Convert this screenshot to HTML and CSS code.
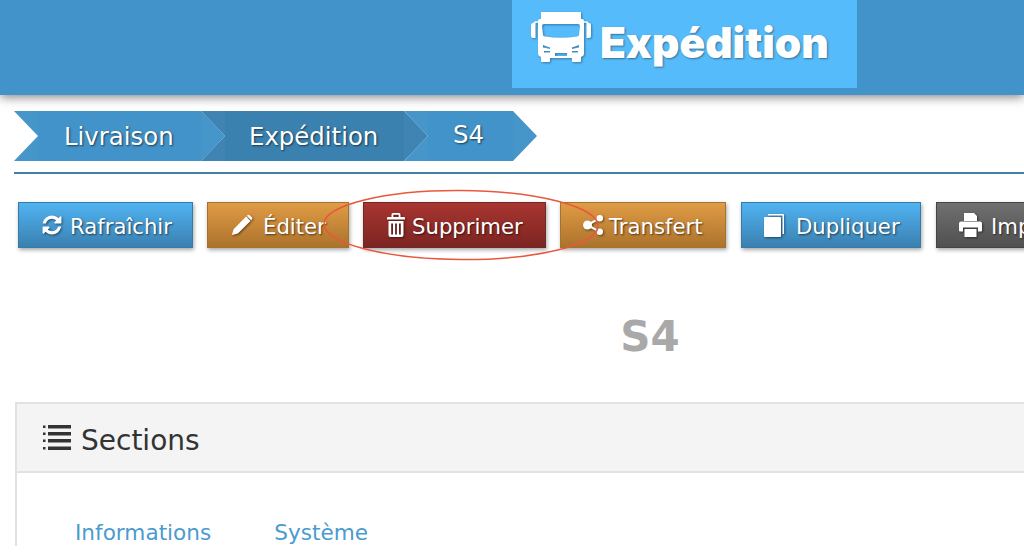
FILE: index.html
```html
<!DOCTYPE html>
<html lang="fr">
<head>
    <meta charset="UTF-8">
    <title>Expédition</title>
    <link rel="stylesheet" href="styles.css">
</head>
<body>
<div class="header">
    <div class="app_tab">
        <svg class="truck" viewBox="0 0 60 50">
            <path fill="#fff" fill-rule="evenodd" d="M10 0h40v7h1q2 0 2 2v33q0 2-3 3v4q0 1-1 1h-7q-1 0-1-1v-3H19v3q0 1-1 1h-7q-1 0-1-1v-4q-3-1-3-3V9q0-2 2-2h1zM13 12q-2 0-2 2l1 9q0 1 2 1.500q16 2.500 32 0q2-.5 2-1.500l1-9q0-2-2-2zM12 33l7 2.500v1.500l-7-1.500zM48 33l-7 2.500v1.500l7-1.500zM13 39v1.500h6V39zM41 39v1.500h6V39zM24 41v3h12v-3z"/>
            <path fill="none" stroke="#fff" stroke-width="1.500" d="M8 10H5q-2 0-2 2M52 10h3q2 0 2 2"/>
            <path fill="#fff" d="M0 13q0-2 2-2h2.500v15H2q-2 0-2-2zM55.500 11H58q2 0 2 2v11q0 2-2 2h-2.500z"/>
        </svg>
        <span class="app_title">Expédition</span>
    </div>
</div>

<div class="content">
    <div class="crumbs">
        <a class="crumb crumb_first">Livraison</a>
        <a class="crumb crumb_dark">Expédition</a>
        <a class="crumb crumb_last"><span>S4</span></a>
    </div>

    <div class="toolbar">
        <button class="btn btn_blue btn_refresh" type="button">
            <svg class="icon" viewBox="0 0 1792 1792"><path d="M1639 1056q0 5-1 7-64 268-268 434.5t-478 166.5q-146 0-282.5-55t-243.5-157l-129 129q-19 19-45 19t-45-19-19-45v-448q0-26 19-45t45-19h448q26 0 45 19t19 45-19 45l-137 137q71 66 161 102t187 36q134 0 250-65t186-179q11-17 53-117 8-23 30-23h192q13 0 22.500 9.500t9.500 22.500zm25-800v448q0 26-19 45t-45 19h-448q-26 0-45-19t-19-45 19-45l138-138q-148-137-349-137-134 0-250 65t-186 179q-11 17-53 117-8 23-30 23h-199q-13 0-22.500-9.500t-9.500-22.500v-7q65-268 270-434.500t480-166.500q146 0 284 55.500t245 156.500l130-129q19-19 45-19t45 19 19 45z"/></svg>
            <span class="btn_text">Rafraîchir</span>
        </button>
        <button class="btn btn_orange btn_edit" type="button">
            <svg class="icon" viewBox="0 0 24 24"><path d="M1 23l1.800-6.500L16.500 2.800l4.700 4.700L7.500 21.200zM18 1.300q1.200-1.200 2.400 0l2.300 2.300q1.200 1.200 0 2.400l-.7.700-4.700-4.700z"/></svg>
            <span class="btn_text">Éditer</span>
        </button>
        <button class="btn btn_red btn_delete" type="button">
            <svg class="icon" viewBox="0 0 18 24"><path fill-rule="evenodd" d="M6 0h6q1.500 0 1.500 1.500V4H17q1 0 1 1v1.500H0V5q0-1 1-1h3.500V1.500Q4.500 0 6 0zM6.300 1.800V4h5.400V1.800zM1.500 8h15v14q0 2-2 2h-11q-2 0-2-2zM4.200 10.500v11H6v-11zM8.100 10.500v11h1.800v-11zM12 10.500v11h1.800v-11z"/></svg>
            <span class="btn_text">Supprimer</span>
        </button>
        <button class="btn btn_orange btn_transfer" type="button">
            <svg class="icon" viewBox="0 0 20 20"><circle cx="4.500" cy="10" r="4.500"/><circle cx="16.800" cy="3.200" r="3.200"/><circle cx="16.800" cy="16.800" r="3.200"/><path d="M4.500 10L16.800 3.200M4.500 10l12.300 6.800" stroke="#fff" stroke-width="2"/></svg>
            <span class="btn_text">Transfert</span>
        </button>
        <button class="btn btn_blue btn_copy" type="button">
            <svg class="icon" viewBox="0 0 20 23"><path d="M4 0h15q1 0 1 1v19h-1.500V1.500H4z"/><path d="M1 3h15q1 0 1 1v18q0 1-1 1H1q-1 0-1-1V4q0-1 1-1z"/></svg>
            <span class="btn_text">Dupliquer</span>
        </button>
        <button class="btn btn_grey btn_print" type="button">
            <svg class="icon" viewBox="0 0 23 24"><path fill-rule="evenodd" d="M5 0h10l3 3v5H5zM2 8.500h19q2 0 2 2v7q0 1-1 1h-3v-4H4v4H1q-1 0-1-1v-7q0-2 2-2zM5.500 16h12v8h-12z"/></svg>
            <span class="btn_text">Imprimer</span>
        </button>
    </div>

    <h2 class="page_title">S4</h2>

    <div class="panel">
        <div class="panel_head">
            <svg class="list_icon" viewBox="0 0 28 25"><path d="M0 .5h2.500V3H0zM5 0h23v3.500H5zM0 7.500h2.500V10H0zM5 7h23v3.500H5zM0 14.500h2.500V17H0zM5 14h23v3.500H5zM0 22h2.500v2.500H0zM5 21.500h23V25H5z"/></svg>
            <span class="panel_title">Sections</span>
        </div>
        <div class="panel_body">
            <a class="tab_link">Informations</a>
            <a class="tab_link">Système</a>
        </div>
    </div>
</div>

<svg class="circled" viewBox="0 0 290 80">
    <ellipse cx="145" cy="40" rx="137" ry="34.500" fill="none" stroke="#e8583c" stroke-width="1.500" transform="rotate(.4 145 40)"/>
</svg>
</body>
</html>
```

FILE: styles.css
```css
html, body {
    margin: 0;
    padding: 0;
    height: 555px;
    overflow: hidden;
    background: #fff;
    font-family: "DejaVu Sans", Verdana, sans-serif;
}

.header {
    height: 95px;
    padding-left: 512px;
    background: #4293c9;
    box-shadow: 0 2px 10px rgba(0, 0, 0, 0.5);
}

.app_tab {
    width: 345px;
    height: 88px;
    background: #56bbfa;
    display: flex;
    align-items: flex-start;
}

.truck {
    width: 60px;
    height: 50px;
    margin: 12px 0 0 19px;
    filter: drop-shadow(1px 1px 1px rgba(0, 0, 0, 0.35));
}

.app_title {
    margin: 14px 0 0 9px;
    color: #fff;
    font-family: Inter, sans-serif;
    font-weight: 900;
    font-size: 42.5px;
    line-height: 58px;
    text-shadow: 1px 1px 2px rgba(0, 0, 0, 0.4);
}

.content {
    padding-left: 14px;
    width: 1200px;
}

.crumbs {
    display: flex;
    margin-top: 16px;
    height: 50px;
    width: 1010px;
    padding-bottom: 11px;
    border-bottom: 2px solid #447fa6;
}

.crumb {
    box-sizing: border-box;
    height: 50px;
    margin-left: -24px;
    padding-top: 1px;
    color: #fff;
    font-size: 24.400px;
    line-height: 50px;
    text-shadow: 1px 1px 2px rgba(0, 0, 0, 0.6);
    background-color: #4293c9;
    background-image: linear-gradient(to right, rgba(255, 255, 255, 0.025) 24px, transparent 24px, transparent calc(100% - 24px), rgba(255, 255, 255, 0.025) calc(100% - 24px));
    clip-path: polygon(0 0, calc(100% - 24px) 0, 100% 50%, calc(100% - 24px) 100%, 0 100%, 24px 50%);
}

.crumb_first {
    width: 211px;
    margin-left: 0;
    padding-left: 50px;
}

.crumb_dark {
    width: 227px;
    padding-left: 48px;
    background-color: #3a81b0;
}

.crumb_last {
    width: 133px;
    padding-left: 49px;
}

.crumb_last span {
    display: block;
    margin-top: -2px;
}

.toolbar {
    display: flex;
    gap: 14px;
    margin: 28px 0 0 4px;
}

.btn {
    box-sizing: border-box;
    flex: none;
    height: 46px;
    display: flex;
    align-items: center;
    justify-content: flex-start;
    padding: 0 0 0 22px;
    color: #fff;
    font-family: inherit;
    font-size: 21.200px;
    white-space: nowrap;
    border: 1px solid;
    text-shadow: 1px 1px 2px rgba(0, 0, 0, 0.6);
    box-shadow: 1px 2px 4px rgba(0, 0, 0, 0.35);
}

.btn_text {
    padding-top: 2px;
}

.btn_blue {
    background: linear-gradient(#50b3f2, #3a80b0);
    border-color: #3a7ba6;
}

.btn_orange {
    background: linear-gradient(#e09c45, #ac722c);
    border-color: #a0752f;
}

.btn_red {
    background: linear-gradient(#a83530, #7c2522);
    border-color: #6d2a28;
}

.btn_grey {
    background: linear-gradient(#707070, #505050);
    border-color: #444;
}

.btn_refresh { width: 175px; gap: 7px; }
.btn_edit { width: 142px; padding-left: 23px; gap: 10px; }
.btn_delete { width: 183px; padding-left: 23px; gap: 7px; }
.btn_transfer { width: 166px; gap: 6px; }
.btn_copy { width: 180px; margin-left: 1px; gap: 12px; }
.btn_print { width: 180px; margin-left: 1px; gap: 9px; }

.icon {
    width: 22px;
    height: 22px;
    fill: #fff;
    flex: none;
    filter: drop-shadow(1px 1px 1px rgba(0, 0, 0, 0.5));
}

.btn_delete .icon { width: 18px; height: 24px; }
.btn_transfer .icon { width: 20px; height: 20px; }
.btn_copy .icon { width: 20px; height: 23px; }
.btn_print .icon { width: 23px; height: 24px; }

.page_title {
    margin: 60px 0 0;
    width: 1272px;
    text-align: center;
    color: #a9a9a9;
    font-weight: bold;
    font-size: 42px;
    line-height: 58px;
}

.panel {
    margin: 36px 0 0 1px;
    border: 2px solid #e2e2e2;
    border-bottom: 0;
    width: 1180px;
}

.panel_head {
    box-sizing: border-box;
    height: 69px;
    display: flex;
    align-items: center;
    gap: 10px;
    padding-left: 26px;
    background: #f4f4f4;
    border-bottom: 2px solid #e2e2e2;
    color: #333;
    font-size: 28px;
}

.panel_title {
    padding-top: 5px;
}

.list_icon {
    width: 28px;
    height: 25px;
    fill: #333;
}

.panel_body {
    display: flex;
    gap: 63px;
    padding: 47px 0 0 58px;
}

.tab_link {
    color: #4a9bd0;
    font-size: 21.600px;
    line-height: 26px;
}

.circled {
    position: absolute;
    left: 316px;
    top: 185px;
    width: 290px;
    height: 80px;
}
```
